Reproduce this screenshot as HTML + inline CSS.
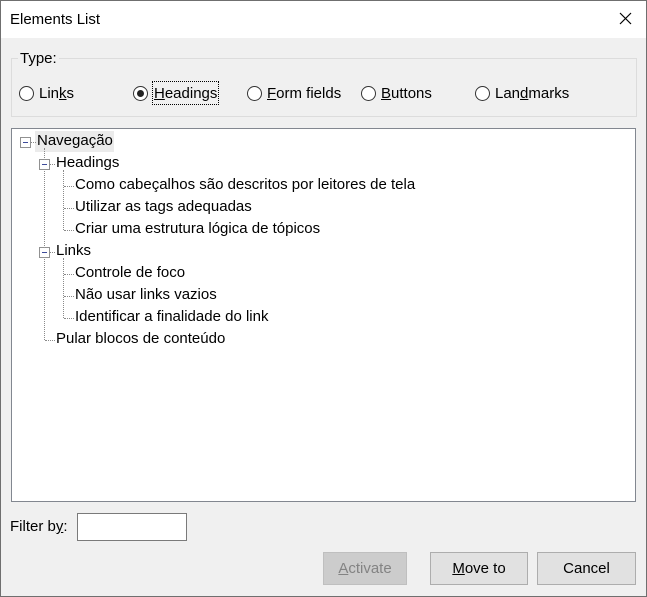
<!DOCTYPE html>
<html><head><meta charset="utf-8"><style>
*{margin:0;padding:0;box-sizing:border-box}
body{width:647px;height:597px;overflow:hidden;background:#f0f0f0;font-family:"Liberation Sans",sans-serif;font-size:15px;color:#000;position:relative}
.win{position:absolute;left:0;top:0;width:647px;height:597px;border:1px solid #6f6f6f}
.title{position:absolute;left:1px;top:1px;width:645px;height:37px;background:#fff}
.abs{position:absolute;white-space:nowrap}
.group{position:absolute;left:11px;top:58px;width:626px;height:59px;border:1px solid #dcdcdc}
.radio{position:absolute;width:15px;height:15px;border:1px solid #333;border-radius:50%;background:#fff;top:86px}
.dot{position:absolute;left:3px;top:3px;width:7px;height:7px;border-radius:50%;background:#222}
.tree{position:absolute;left:11px;top:128px;width:625px;height:374px;background:#fff;border:1px solid #828790}
.exp{position:absolute;width:11px;height:11px;border:1px solid #919191;background:#fff}
.exp:after{content:"";position:absolute;left:2px;top:4px;width:5px;height:1px;background:#3e4c9a}
.vl{position:absolute;width:0;border-left:1px dotted #8a8a8a}
.hl{position:absolute;height:0;border-top:1px dotted #8a8a8a}
.btn{position:absolute;top:552px;height:33px;border:1px solid #adadad;background:#e1e1e1;text-align:center;line-height:31px}
u{text-decoration:underline}
</style></head><body>
<div class="win"></div>
<div class="title"></div>
<div class="abs" style="left:10px;top:11px">Elements List</div>
<svg class="abs" style="left:619px;top:12px" width="13" height="13"><path d="M1 1L12 12M12 1L1 12" stroke="#000" stroke-width="1.2"/></svg>

<div class="group"></div>
<div class="abs" style="left:18px;top:50px;background:#f0f0f0;padding:0 2px">Type:</div>
<div class="radio" style="left:19px"></div><div class="abs" style="left:39px;top:85px">Lin<u>k</u>s</div>
<div class="radio" style="left:133px"><div class="dot"></div></div><div class="abs" style="left:152px;top:81px;border:1px dotted #000;padding:3px 1px 2px 1px"><u>H</u>eadings</div>
<div class="radio" style="left:247px"></div><div class="abs" style="left:267px;top:85px"><u>F</u>orm fields</div>
<div class="radio" style="left:361px"></div><div class="abs" style="left:381px;top:85px"><u>B</u>uttons</div>
<div class="radio" style="left:475px"></div><div class="abs" style="left:495px;top:85px">Lan<u>d</u>marks</div>

<div class="tree"></div>
<div class="abs" style="left:35px;top:131px;width:79px;height:21px;background:#ebebeb"></div>
<div class="exp" style="left:20px;top:137px"></div><div class="hl" style="left:31px;top:142px;width:5px"></div>
<div class="abs" style="left:37px;top:132px">Navegação</div>
<div class="vl" style="left:44px;top:148px;height:192px"></div>
<div class="exp" style="left:39px;top:159px"></div><div class="hl" style="left:50px;top:164px;width:5px"></div>
<div class="abs" style="left:56px;top:154px">Headings</div>
<div class="vl" style="left:63px;top:170px;height:60px"></div>
<div class="hl" style="left:64px;top:186px;width:10px"></div><div class="abs" style="left:75px;top:176px">Como cabeçalhos são descritos por leitores de tela</div>
<div class="hl" style="left:64px;top:208px;width:10px"></div><div class="abs" style="left:75px;top:198px">Utilizar as tags adequadas</div>
<div class="hl" style="left:64px;top:230px;width:10px"></div><div class="abs" style="left:75px;top:220px">Criar uma estrutura lógica de tópicos</div>
<div class="exp" style="left:39px;top:247px"></div><div class="hl" style="left:50px;top:252px;width:5px"></div>
<div class="abs" style="left:56px;top:242px">Links</div>
<div class="vl" style="left:63px;top:258px;height:60px"></div>
<div class="hl" style="left:64px;top:274px;width:10px"></div><div class="abs" style="left:75px;top:264px">Controle de foco</div>
<div class="hl" style="left:64px;top:296px;width:10px"></div><div class="abs" style="left:75px;top:286px">Não usar links vazios</div>
<div class="hl" style="left:64px;top:318px;width:10px"></div><div class="abs" style="left:75px;top:308px">Identificar a finalidade do link</div>
<div class="hl" style="left:45px;top:340px;width:10px"></div><div class="abs" style="left:56px;top:330px">Pular blocos de conteúdo</div>

<div class="abs" style="left:10px;top:518px">Filter b<u>y</u>:</div>
<div class="abs" style="left:77px;top:513px;width:110px;height:28px;background:#fff;border:1px solid #7a7a7a"></div>

<div class="btn" style="left:323px;width:84px;background:#cccccc;border-color:#bfbfbf;color:#838383"><u>A</u>ctivate</div>
<div class="btn" style="left:430px;width:98px"><u>M</u>ove to</div>
<div class="btn" style="left:537px;width:99px">Cancel</div>
</body></html>
